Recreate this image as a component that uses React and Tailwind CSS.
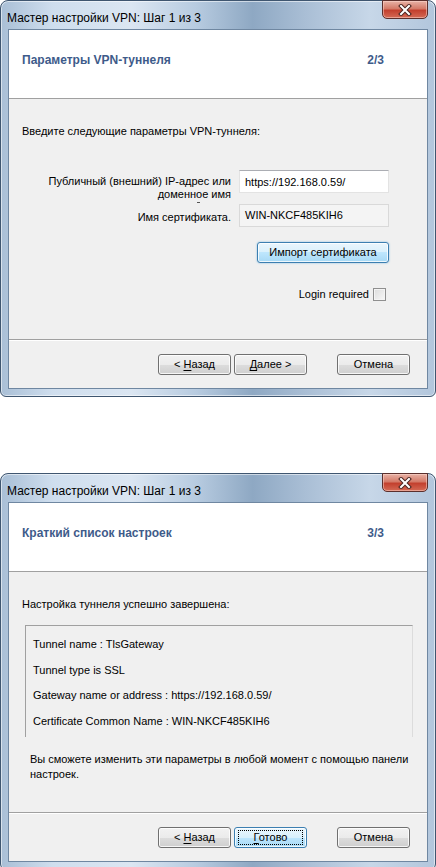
import React from 'react';

const font = { fontFamily: '"Liberation Sans", "DejaVu Sans", sans-serif' };

function CloseButton() {
  return (
    <div className="w-[46px] h-[19px] -mt-px rounded-b-[5px] border border-[#5b2f2c] bg-[linear-gradient(#e8b2a6_0%,#d47a68_45%,#c3402e_55%,#d46a55_100%)] flex items-center justify-center shadow-[inset_0_0_0_1px_rgba(255,220,210,0.5)]">
      <svg width="14" height="12" viewBox="0 0 14 12">
        <path d="M3 2 L11 10 M11 2 L3 10" stroke="#4a2420" strokeWidth="4" strokeLinecap="square" />
        <path d="M3 2 L11 10 M11 2 L3 10" stroke="#ffffff" strokeWidth="2" strokeLinecap="square" />
      </svg>
    </div>
  );
}

function WinButton({ children, def, focused }) {
  return (
    <button
      className={`w-[73px] h-[21px] rounded-[3px] border text-[11px] text-black flex items-center justify-center shadow-[inset_0_0_0_1px_rgba(255,255,255,0.8)] ${
        def
          ? 'border-[#3c7fb1] bg-[linear-gradient(#eaf6fd_0%,#d9f0fc_50%,#bee6fd_50%,#a7d9f5_100%)]'
          : 'border-[#707070] bg-[linear-gradient(#f2f2f2_0%,#ebebeb_50%,#dddddd_50%,#cfcfcf_100%)]'
      }`}
    >
      {focused ? (
        <span className="border border-dotted border-black w-[65px] h-[15px] flex items-center justify-center">
          <span>{children}</span>
        </span>
      ) : (
        <span>{children}</span>
      )}
    </button>
  );
}

function Dialog({ heading, step, children, buttons }) {
  return (
    <div className="w-[436px] rounded-t-[8px] rounded-b-[6px] border border-[#3f5670] bg-[linear-gradient(to_right,#a9bfd6_0%,#cfdeee_12%,#dbe6f2_30%,#b7cbe0_45%,#8ea8c3_58%,#a9bed5_70%,#c7d7e8_85%,#b2c6dc_100%)] px-[7px] pb-[7px] shadow-[inset_0_0_0_1px_rgba(255,255,255,0.55)]">
      <div className="h-[28px] flex justify-between items-start">
        <span className="text-[12px] text-black mt-[8px] -ml-[1px]">Мастер настройки VPN: Шаг 1 из 3</span>
        <CloseButton />
      </div>
      <div className="border border-[#6f87a1] bg-[#f0f0f0]">
        <div className="h-[69px] bg-white border-b border-[#a0a0a0] flex justify-between pl-[13px] pr-[43px] pt-[21px]">
          <span className="text-[12px] font-bold text-[#3e5b8a]">{heading}</span>
          <span className="text-[12px] font-bold text-[#3e5b8a]">{step}</span>
        </div>
        <div className="h-[241px] border-b border-[#a0a0a0]">{children}</div>
        <div className="h-[48px] border-t border-white flex items-start pt-[13px] pr-[17px]">
          <div className="flex-1" />
          {buttons}
        </div>
      </div>
    </div>
  );
}

function U({ children }) {
  return <span className="underline underline-offset-2">{children}</span>;
}

function ImportButton() {
  return (
    <button className="w-[132px] h-[21px] rounded-[3px] border border-[#3c7fb1] bg-[linear-gradient(#eaf6fd_0%,#d9f0fc_50%,#bee6fd_50%,#a7d9f5_100%)] shadow-[inset_0_0_0_1px_rgba(255,255,255,0.8),0_0_2px_#7ab8e0] text-[11px] text-black flex items-center justify-center">
      Импорт сертификата
    </button>
  );
}

export default function App() {
  return (
    <div className="w-[436px] h-[867px] bg-white text-[11px] text-black" style={font}>
      <Dialog
        heading="Параметры VPN-туннеля"
        step="2/3"
        buttons={
          <>
            <WinButton>&lt; <U>Н</U>азад</WinButton>
            <div className="w-[3px]" />
            <WinButton><U>Д</U>алее &gt;</WinButton>
            <div className="w-[30px]" />
            <WinButton>Отмена</WinButton>
          </>
        }
      >
        <div className="pl-[13px] pt-[25px] leading-[15px]">Введите следующие параметры VPN-туннеля:</div>
        <div className="flex mt-[31px]">
          <div className="w-[230px] text-right leading-[13px] pt-[5px] pr-[8px] relative">
            <div>Публичный (внешний) IP-адрес или</div>
            <div>доменное имя</div>
            <div className="absolute left-[188px] top-[32px] w-[3px] h-px bg-[#555]" />
          </div>
          <div className="w-[150px] h-[23px] bg-white border border-[#e3e3e3] border-t-[#abadb3] pl-[5px] pt-[4px] leading-[14px]">https://192.168.0.59/</div>
        </div>
        <div className="flex mt-[3px]">
          <div className="w-[230px] text-right pr-[8px] pt-[6px] leading-[14px]">Имя сертификата.</div>
          <div className="w-[150px] h-[23px] bg-[#f4f4f4] border border-[#d9d9d9] pl-[5px] pt-[3px] leading-[14px]">WIN-NKCF485KIH6</div>
        </div>
        <div className="flex mt-[15px]">
          <div className="w-[248px]" />
          <ImportButton />
        </div>
        <div className="flex items-center justify-end mt-[24px] pr-[41px] gap-[4px]">
          <span className="leading-[14px]">Login required</span>
          <div className="w-[13px] h-[13px] border border-[#8f8f8f] bg-[linear-gradient(135deg,#dcdcdc,#f8f8f8)] shadow-[inset_0_0_0_1px_#f4f4f4]" />
        </div>
      </Dialog>

      <div className="h-[76px]" />

      <Dialog
        heading="Краткий список настроек"
        step="3/3"
        buttons={
          <>
            <WinButton>&lt; <U>Н</U>азад</WinButton>
            <div className="w-[3px]" />
            <WinButton def focused><U>Г</U>отово</WinButton>
            <div className="w-[30px]" />
            <WinButton>Отмена</WinButton>
          </>
        }
      >
        <div className="pl-[13px] pt-[25px] leading-[15px]">Настройка туннеля успешно завершена:</div>
        <div className="ml-[16px] mr-[14px] mt-[13px] h-[112px] border-t border-l border-[#a0a0a0] border-r-[#dcdcdc] border-r pl-[7px] pt-[10px] leading-[16px]">
          <div>Tunnel name : TlsGateway</div>
          <div className="mt-[9.5px]">Tunnel type is SSL</div>
          <div className="mt-[9.5px]">Gateway name or address : https://192.168.0.59/</div>
          <div className="mt-[9.5px]">Certificate Common Name : WIN-NKCF485KIH6</div>
        </div>
        <div className="pl-[21px] pr-[2px] mt-[15px] leading-[15px]">
          Вы сможете изменить эти параметры в любой момент с помощью панели настроек.
        </div>
      </Dialog>
    </div>
  );
}
